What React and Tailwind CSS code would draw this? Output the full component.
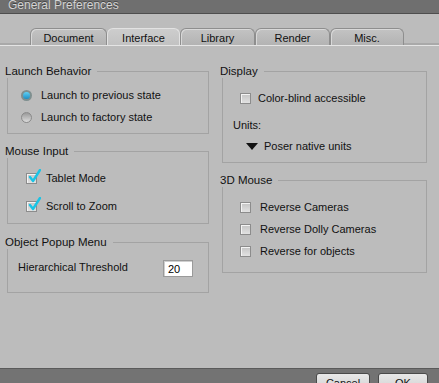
import React from "react";

function Group({ label, className, children }) {
  return (
    <div className={`relative border border-[#a3a3a3] ${className}`}>
      <span className="absolute -top-[8px] -left-[3px] bg-[#bcbcbc] pr-[6px] text-[11.5px] leading-[14px] text-[#111] whitespace-nowrap">
        {label}
      </span>
      {children}
    </div>
  );
}

function Checkbox({ checked }) {
  return (
    <span className="relative block w-[11px] h-[11px] shrink-0 border border-[#8c8c8c] bg-gradient-to-b from-[#c4c4c4] to-[#e2e2e2] shadow-[inset_1px_1px_0_#f4f4f4]">
      {checked && (
        <svg className="absolute -top-[5px] left-[1px]" width="13" height="14" viewBox="0 0 13 14">
          <path d="M2 8 L5 12 L12 1" fill="none" stroke="#19c4e6" strokeWidth="2.4" strokeLinecap="round" strokeLinejoin="round" />
        </svg>
      )}
    </span>
  );
}

function Radio({ checked }) {
  return checked ? (
    <span className="block w-[11px] h-[11px] shrink-0 rounded-full bg-[#7e8f8f] p-[2px]">
      <span className="block w-full h-full rounded-full bg-gradient-to-b from-[#5fd0f4] to-[#1a8fc4]" />
    </span>
  ) : (
    <span className="block w-[11px] h-[11px] shrink-0 rounded-full border border-[#8a8a8a] bg-gradient-to-b from-[#9a9a9a] to-[#dcdcdc]" />
  );
}

function Tab({ label, width, selected }) {
  return (
    <div
      className={
        selected
          ? "h-[17px] flex justify-center pt-[3px] rounded-t-[6px] border border-b-0 border-[#e2e2e2] bg-gradient-to-b from-[#cdcdcd] to-[#c2c2c2] text-[11px] leading-[12px] text-[#111] shrink-0"
          : "h-[17px] flex justify-center pt-[3px] rounded-t-[6px] border border-b-0 border-[#8e8e8e] bg-gradient-to-b from-[#c3c3c3] to-[#b3b3b3] shadow-[inset_1px_1px_0_#d8d8d8] text-[11px] leading-[12px] text-[#111] shrink-0"
      }
      style={{ width }}
    >
      {label}
    </div>
  );
}

export default function App() {
  return (
    <div className="w-[439px] h-[383px] overflow-hidden flex flex-col bg-[#bcbcbc] font-['Liberation_Sans',Arial,sans-serif] text-[11px] text-[#111]">
      {/* title bar */}
      <div className="h-[14px] shrink-0 bg-[#6f6f6f] border-b border-[#4e4e4e] pl-[8px] overflow-hidden">
        <div className="text-[12px] leading-[12px] -mt-[1px] text-[#d4d4d4] [text-shadow:0_-1px_0_#444]">
          General Preferences
        </div>
      </div>

      {/* tabs */}
      <div className="h-[32px] shrink-0 flex items-end pl-[30px] border-b border-[#e4e4e4] shadow-[inset_0_-2px_0_#a9a9a9]">
        <Tab label="Document" width={77} />
        <Tab label="Interface" width={73} selected />
        <Tab label="Library" width={75} />
        <Tab label="Render" width={75} />
        <Tab label="Misc." width={74} />
      </div>

      {/* body */}
      <div className="flex-1 flex">
        <div className="w-[212px] shrink-0 pl-[7px] pt-[25px] flex flex-col">
          <Group label="Launch Behavior" className="w-[202px] h-[63px] pt-[12px] pl-[13px]">
            <div className="h-[22px] flex items-center gap-[9px]">
              <Radio checked />
              <span>Launch to previous state</span>
            </div>
            <div className="h-[22px] flex items-center gap-[9px]">
              <Radio />
              <span>Launch to factory state</span>
            </div>
          </Group>

          <Group label="Mouse Input" className="w-[202px] h-[73px] mt-[17px] pt-[12px] pl-[18px]">
            <div className="h-[28px] flex items-center gap-[9px]">
              <Checkbox checked />
              <span>Tablet Mode</span>
            </div>
            <div className="h-[28px] flex items-center gap-[9px]">
              <Checkbox checked />
              <span>Scroll to Zoom</span>
            </div>
          </Group>

          <Group label="Object Popup Menu" className="w-[202px] h-[51px] mt-[18px] pt-[13px] pl-[10px]">
            <div className="h-[22px] flex items-center">
              <span>Hierarchical Threshold</span>
              <div className="ml-auto mr-[15px] mt-[3px] w-[30px] h-[17px] bg-white border border-[#9a9a9a] shadow-[inset_1px_1px_0_#cfcfcf] pl-[4px] leading-[16px] text-[#000]">
                20
              </div>
            </div>
          </Group>
        </div>

        <div className="pl-[10px] pt-[25px] flex flex-col">
          <Group label="Display" className="w-[205px] h-[92px] pt-[15px]">
            <div className="h-[22px] flex items-center gap-[7px] pl-[17px]">
              <Checkbox />
              <span>Color-blind accessible</span>
            </div>
            <div className="h-[16px] mt-[8px] pl-[10px] flex items-center">Units:</div>
            <div className="h-[16px] mt-[5px] pl-[23px] flex items-center gap-[6px]">
              <svg width="12" height="7" viewBox="0 0 12 7" className="shrink-0">
                <path d="M0 0 L12 0 L6 7 Z" fill="#111" />
              </svg>
              <span>Poser native units</span>
            </div>
          </Group>

          <Group label="3D Mouse" className="w-[205px] h-[93px] mt-[17px] pt-[15px] pl-[17px]">
            <div className="h-[22px] flex items-center gap-[9px]">
              <Checkbox />
              <span>Reverse Cameras</span>
            </div>
            <div className="h-[22px] flex items-center gap-[9px]">
              <Checkbox />
              <span>Reverse Dolly Cameras</span>
            </div>
            <div className="h-[22px] flex items-center gap-[9px]">
              <Checkbox />
              <span>Reverse for objects</span>
            </div>
          </Group>
        </div>
      </div>

      {/* bottom bar */}
      <div className="h-[15px] shrink-0 bg-[#737373] border-t border-[#5a5a5a] flex items-start justify-end gap-[8px] pr-[11px]">
        <div className="mt-[4px] w-[54px] h-[20px] shrink-0 rounded-t-[3px] border border-[#4a4a4a] bg-gradient-to-b from-[#e8e8e8] to-[#cfcfcf] flex justify-center pt-[3px] text-[11px] leading-[12px] text-[#111]">
          Cancel
        </div>
        <div className="mt-[4px] w-[50px] h-[20px] shrink-0 rounded-t-[3px] border border-[#4a4a4a] bg-gradient-to-b from-[#e8e8e8] to-[#cfcfcf] flex justify-center pt-[3px] text-[11px] leading-[12px] text-[#111]">
          OK
        </div>
      </div>
    </div>
  );
}
